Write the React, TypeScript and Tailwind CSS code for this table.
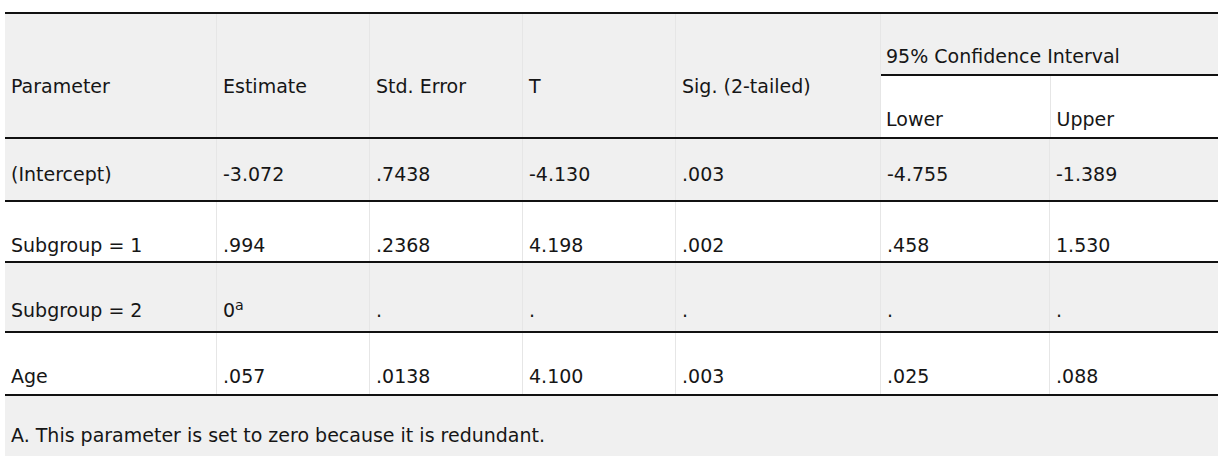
import React from "react";

const cols = "grid grid-cols-[211px_153px_153px_153px_205px_169px_169px]";

const rows = [
  { label: "(Intercept)", vals: ["-3.072", ".7438", "-4.130", ".003", "-4.755", "-1.389"], bg: "bg-[#f0f0f0]", h: "h-[61px]", pt: "pt-[24px]" },
  { label: "Subgroup = 1", vals: [".994", ".2368", "4.198", ".002", ".458", "1.530"], bg: "bg-white", h: "h-[59px]", pt: "pt-[32px]" },
  { label: "Subgroup = 2", vals: ["0a", ".", ".", ".", ".", "."], bg: "bg-[#f0f0f0]", h: "h-[68px]", pt: "pt-[36px]" },
  { label: "Age", vals: [".057", ".0138", "4.100", ".003", ".025", ".088"], bg: "bg-white", h: "h-[61px]", pt: "pt-[32px]" },
];

function Cell({ children, className = "" }: { children?: React.ReactNode; className?: string }) {
  return <div className={`pl-[6px] border-l border-[#e6e6e6] first:border-l-0 ${className}`}>{children}</div>;
}

export default function App() {
  return (
    <div className="bg-white w-[1221px] h-[456px] overflow-hidden pt-[12px] pl-[5px] text-[19px] leading-[22px] text-[#161616]" style={{ fontFamily: '"DejaVu Sans", Verdana, sans-serif' }}>
      <div className="w-[1213px] border-t-2 border-[#111]">
        {/* Header */}
        <div className="flex h-[125px] border-b-2 border-[#111] bg-[#f0f0f0]">
          <div className="grid grid-cols-[211px_153px_153px_153px_205px] w-[875px]">
            {["Parameter", "Estimate", "Std. Error", "T", "Sig. (2-tailed)"].map((h) => (
              <Cell key={h} className="pt-[61px]">{h}</Cell>
            ))}
          </div>
          <div className="flex flex-col w-[338px] border-l border-[#e6e6e6]">
            <div className="h-[62px] border-b-2 border-[#111] pl-[5px] pt-[31px]">95% Confidence Interval</div>
            <div className="flex flex-1 bg-white">
              <div className="w-[169px] pl-[5px] pt-[32px]">Lower</div>
              <div className="w-[169px] pl-[6px] pt-[32px] border-l border-[#e6e6e6]">Upper</div>
            </div>
          </div>
        </div>

        {/* Body */}
        {rows.map((r) => (
          <div key={r.label} className={`${cols} ${r.h} ${r.bg} border-b-2 border-[#111] box-content`}>
            <Cell className={r.pt}>{r.label}</Cell>
            {r.vals.map((v, i) => (
              <Cell key={i} className={r.pt}>
                {v === "0a" ? (
                  <>
                    0<sup>a</sup>
                  </>
                ) : (
                  v
                )}
              </Cell>
            ))}
          </div>
        ))}

        {/* Footnote */}
        <div className="h-[60px] bg-[#f0f0f0] pl-[6px] pt-[28px]">A. This parameter is set to zero because it is redundant.</div>
      </div>
    </div>
  );
}
